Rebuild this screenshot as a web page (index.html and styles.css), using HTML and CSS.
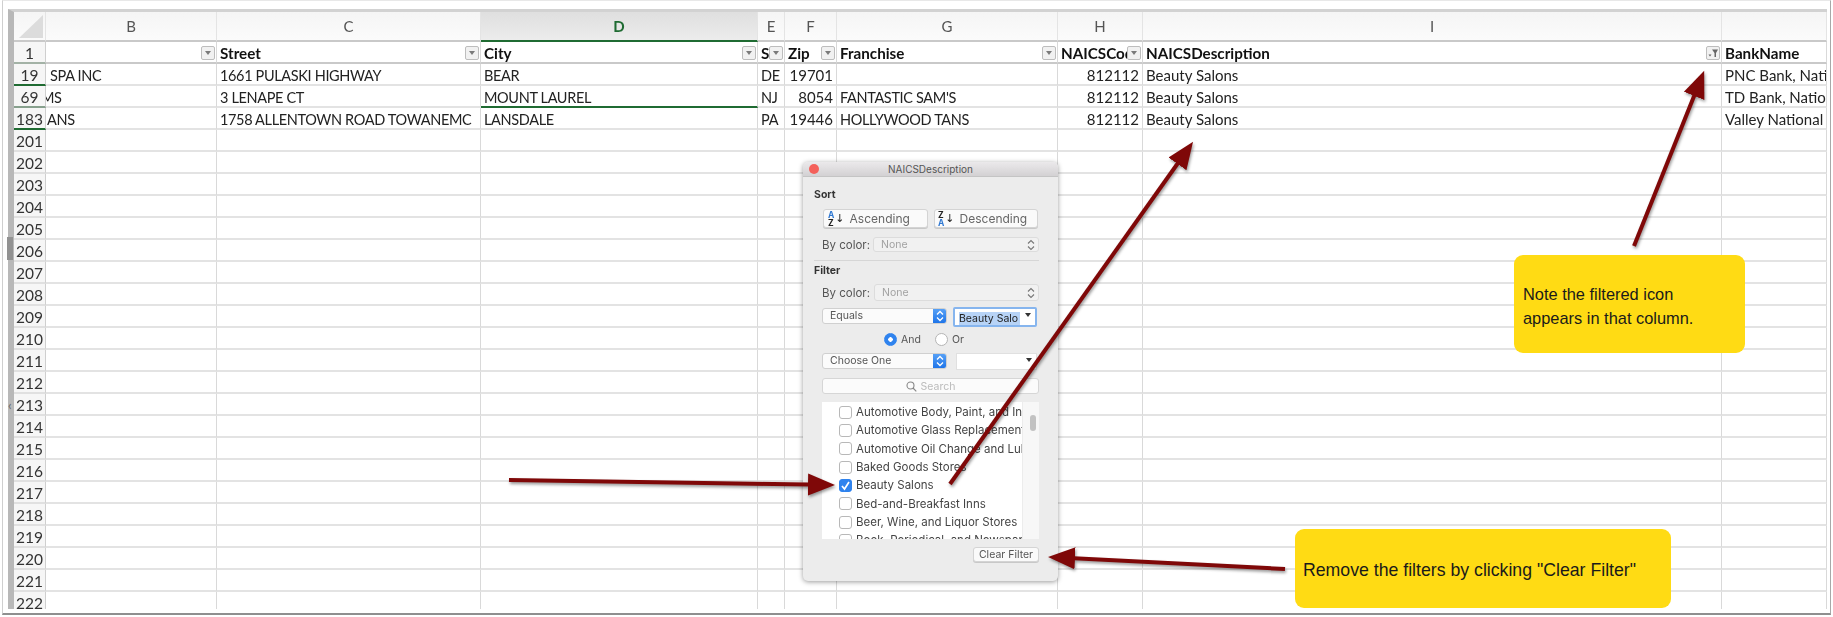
FILE: index.html
```html
<!DOCTYPE html>
<html lang="en">
<head>
  <meta charset="UTF-8">
  <title>NAICSDescription filter</title>
  <link rel="stylesheet" href="styles.css">
</head>
<body>

  <div class="frame">
    <div class="sheet">
      <table class="grid">
        <colgroup>
          <col class="c-num"><col class="c-b"><col class="c-c"><col class="c-d"><col class="c-e">
          <col class="c-f"><col class="c-g"><col class="c-h"><col class="c-i"><col class="c-j">
        </colgroup>
        <tr class="letters">
          <th class="corner"><span class="corner-mark"></span></th>
          <th>B</th><th>C</th><th class="active">D</th><th>E</th><th>F</th><th>G</th><th>H</th><th>I</th><th></th>
        </tr>
        <tr class="titles">
          <th class="num">1</th>
          <td><div class="title"><span></span><i class="drop"></i></div></td>
          <td><div class="title"><span>Street</span><i class="drop"></i></div></td>
          <td><div class="title"><span>City</span><i class="drop"></i></div></td>
          <td><div class="title"><span>S</span><i class="drop"></i></div></td>
          <td><div class="title"><span>Zip</span><i class="drop"></i></div></td>
          <td><div class="title"><span>Franchise</span><i class="drop"></i></div></td>
          <td><div class="title"><span>NAICSCode</span><i class="drop"></i></div></td>
          <td><div class="title"><span>NAICSDescription</span>
            <i class="drop filtered"><svg width="12" height="12" viewBox="0 0 12 12"><path d="M1.5 7.5h3l-1.5 2z" fill="#666"/><path d="M5 2.5h6L9 6v4H7.500V6z" fill="#666"/></svg></i>
          </div></td>
          <td><div class="title"><span>BankName</span></div></td>
        </tr>
        <tr>
          <th class="num mark">19</th><td class="caps cut-b">SPA INC</td><td class="caps">1661 PULASKI HIGHWAY</td><td class="caps">BEAR</td><td class="caps">DE</td>
          <td class="r">19701</td><td></td><td class="r">812112</td><td>Beauty Salons</td><td>PNC Bank, National Association</td>
        </tr>
        <tr>
          <th class="num soft">69</th><td class="caps cut-m">MS</td><td class="caps">3 LENAPE CT</td><td class="caps picked">MOUNT LAUREL</td><td class="caps">NJ</td>
          <td class="r">8054</td><td class="caps">FANTASTIC SAM'S</td><td class="r">812112</td><td>Beauty Salons</td><td>TD Bank, National Association</td>
        </tr>
        <tr>
          <th class="num mark">183</th><td class="caps cut-a">ANS</td><td class="caps">1758 ALLENTOWN ROAD TOWANEMC</td><td class="caps">LANSDALE</td><td class="caps">PA</td>
          <td class="r">19446</td><td class="caps">HOLLYWOOD TANS</td><td class="r">812112</td><td>Beauty Salons</td><td>Valley National Bank</td>
        </tr>
        <tr><th class="num">201</th><td></td><td></td><td></td><td></td><td></td><td></td><td></td><td></td><td></td></tr>
        <tr><th class="num">202</th><td></td><td></td><td></td><td></td><td></td><td></td><td></td><td></td><td></td></tr>
        <tr><th class="num">203</th><td></td><td></td><td></td><td></td><td></td><td></td><td></td><td></td><td></td></tr>
        <tr><th class="num">204</th><td></td><td></td><td></td><td></td><td></td><td></td><td></td><td></td><td></td></tr>
        <tr><th class="num">205</th><td></td><td></td><td></td><td></td><td></td><td></td><td></td><td></td><td></td></tr>
        <tr><th class="num">206</th><td></td><td></td><td></td><td></td><td></td><td></td><td></td><td></td><td></td></tr>
        <tr><th class="num">207</th><td></td><td></td><td></td><td></td><td></td><td></td><td></td><td></td><td></td></tr>
        <tr><th class="num">208</th><td></td><td></td><td></td><td></td><td></td><td></td><td></td><td></td><td></td></tr>
        <tr><th class="num">209</th><td></td><td></td><td></td><td></td><td></td><td></td><td></td><td></td><td></td></tr>
        <tr><th class="num">210</th><td></td><td></td><td></td><td></td><td></td><td></td><td></td><td></td><td></td></tr>
        <tr><th class="num">211</th><td></td><td></td><td></td><td></td><td></td><td></td><td></td><td></td><td></td></tr>
        <tr><th class="num">212</th><td></td><td></td><td></td><td></td><td></td><td></td><td></td><td></td><td></td></tr>
        <tr><th class="num">213</th><td></td><td></td><td></td><td></td><td></td><td></td><td></td><td></td><td></td></tr>
        <tr><th class="num">214</th><td></td><td></td><td></td><td></td><td></td><td></td><td></td><td></td><td></td></tr>
        <tr><th class="num">215</th><td></td><td></td><td></td><td></td><td></td><td></td><td></td><td></td><td></td></tr>
        <tr><th class="num">216</th><td></td><td></td><td></td><td></td><td></td><td></td><td></td><td></td><td></td></tr>
        <tr><th class="num">217</th><td></td><td></td><td></td><td></td><td></td><td></td><td></td><td></td><td></td></tr>
        <tr><th class="num">218</th><td></td><td></td><td></td><td></td><td></td><td></td><td></td><td></td><td></td></tr>
        <tr><th class="num">219</th><td></td><td></td><td></td><td></td><td></td><td></td><td></td><td></td><td></td></tr>
        <tr><th class="num">220</th><td></td><td></td><td></td><td></td><td></td><td></td><td></td><td></td><td></td></tr>
        <tr><th class="num">221</th><td></td><td></td><td></td><td></td><td></td><td></td><td></td><td></td><td></td></tr>
        <tr><th class="num">222</th><td></td><td></td><td></td><td></td><td></td><td></td><td></td><td></td><td></td></tr>
      </table>
    </div>
  </div>

  <div class="bar-thumb"></div>
  <div class="bar-arrow">‹</div>

  <div class="dialog">
    <div class="titlebar"><span class="close"></span>NAICSDescription</div>
    <div class="panel">
      <div class="heading">Sort</div>
      <div class="sort-row">
        <div class="btn sort-asc"><span class="az"><b class="blue">A</b><b>Z</b></span><span class="down">↓</span>Ascending</div>
        <div class="btn sort-desc"><span class="az"><b>Z</b><b class="blue">A</b></span><span class="down">↓</span>Descending</div>
      </div>
      <div class="color-row one">
        <span class="color-label">By color:</span>
        <div class="select-off">None
          <svg width="8" height="12" viewBox="0 0 8 12"><path d="M1 4.500l3-3 3 3M1 7.500l3 3 3-3" fill="none" stroke="#777" stroke-width="1.100"/></svg>
        </div>
      </div>
      <div class="divider"></div>
      <div class="heading second">Filter</div>
      <div class="color-row two">
        <span class="color-label">By color:</span>
        <div class="select-off">None
          <svg width="8" height="12" viewBox="0 0 8 12"><path d="M1 4.500l3-3 3 3M1 7.500l3 3 3-3" fill="none" stroke="#777" stroke-width="1.100"/></svg>
        </div>
      </div>
      <div class="rule-row">
        <div class="select">Equals
          <span class="stepper"><svg width="8" height="12" viewBox="0 0 8 12"><path d="M1 4.500l3-3 3 3M1 7.500l3 3 3-3" fill="none" stroke="#fff" stroke-width="1.300"/></svg></span>
        </div>
        <div class="combo focus"><span class="sel-text">Beauty Salo</span><i class="tri"></i></div>
      </div>
      <div class="radio-row">
        <span class="radio on"></span><span class="radio-label">And</span>
        <span class="radio"></span><span class="radio-label">Or</span>
      </div>
      <div class="rule-row choose">
        <div class="select">Choose One
          <span class="stepper"><svg width="8" height="12" viewBox="0 0 8 12"><path d="M1 4.500l3-3 3 3M1 7.500l3 3 3-3" fill="none" stroke="#fff" stroke-width="1.300"/></svg></span>
        </div>
        <div class="combo"><i class="tri"></i></div>
      </div>
      <div class="search">
        <svg width="11" height="11" viewBox="0 0 11 11"><circle cx="4.500" cy="4.500" r="3.500" fill="none" stroke="#888" stroke-width="1.100"/><path d="M7 7l3.300 3.300" stroke="#888" stroke-width="1.200"/></svg>
        Search
      </div>
      <div class="list">
        <div class="items">
          <div class="item"><span class="check"></span>Automotive Body, Paint, and Interior</div>
          <div class="item"><span class="check"></span>Automotive Glass Replacement</div>
          <div class="item"><span class="check"></span>Automotive Oil Change and Lube</div>
          <div class="item"><span class="check"></span>Baked Goods Stores</div>
          <div class="item"><span class="check on"><svg width="11" height="11" viewBox="0 0 11 11"><path d="M2 6l2.500 3L9 2" fill="none" stroke="#fff" stroke-width="1.700"/></svg></span>Beauty Salons</div>
          <div class="item"><span class="check"></span>Bed-and-Breakfast Inns</div>
          <div class="item"><span class="check"></span>Beer, Wine, and Liquor Stores</div>
          <div class="item"><span class="check"></span>Book, Periodical, and Newspaper</div>
        </div>
        <div class="track"><div class="thumb"></div></div>
      </div>
      <div class="clear-row"><div class="btn clear">Clear Filter</div></div>
    </div>
  </div>

  <svg class="arrows" width="1833" height="617" viewBox="0 0 1833 617">
    <defs>
      <marker id="head" markerUnits="userSpaceOnUse" markerWidth="28" markerHeight="24" refX="1" refY="11.500" orient="auto">
        <path d="M0 0.500L27 11.500L0 22.500z" fill="#7f0808"/>
      </marker>
    </defs>
    <line x1="1634" y1="246" x2="1694.500" y2="95" marker-end="url(#head)"/>
    <line x1="950" y1="484" x2="1178" y2="163" marker-end="url(#head)"/>
    <line x1="509" y1="480" x2="809" y2="484.600" marker-end="url(#head)"/>
    <line x1="1285" y1="569" x2="1074" y2="558.300" marker-end="url(#head)"/>
  </svg>

  <div class="note note-icon">Note the filtered icon appears in that column.</div>
  <div class="note note-clear">Remove the filters by clicking "Clear Filter"</div>

</body>
</html>
```

FILE: styles.css
```css
* {
  box-sizing: border-box;
}

html, body {
  margin: 0;
  padding: 0;
  width: 1833px;
  height: 617px;
  overflow: hidden;
  background-color: #ffffff;
}

body {
  position: relative;
  font-family: "Lato", "Liberation Sans", sans-serif;
}

/* spreadsheet */
.frame {
  width: 1829px;
  height: 615px;
  margin-left: 2px;
  padding: 9px 3px 5px 5px;
  border-top: 1px solid #e8e8e8;
  border-left: 1px solid #cfcfcf;
  border-right: 1px solid #a8a8a8;
  border-bottom: 2px solid #8f8f8f;
}

.sheet {
  width: 1819px;
  height: 600px;
  margin-top: -1px;
  overflow: hidden;
  border-top: 3px solid #d2d2d2;
  border-left: 6px solid #b8b8b8;
  filter: blur(0.35px);
}

.bar-thumb {
  position: absolute;
  left: 7px;
  top: 237px;
  width: 6px;
  height: 23px;
  background-color: #929292;
}

.bar-arrow {
  position: absolute;
  left: 8px;
  top: 398px;
  font-size: 13px;
  line-height: 14px;
  color: #666;
}

.grid {
  table-layout: fixed;
  width: 1813px;
  border-collapse: separate;
  border-spacing: 0;
  font-size: 15px;
  color: #222;
}

.c-num { width: 32px; }
.c-b { width: 171px; }
.c-c { width: 264px; }
.c-d { width: 277px; }
.c-e { width: 27px; }
.c-f { width: 52px; }
.c-g { width: 221px; }
.c-h { width: 85px; }
.c-i { width: 579px; }
.c-j { width: 105px; }

.grid tr {
  height: 22px;
}

.grid td {
  height: 22px;
  padding: 2px 0 0 3px;
  overflow: hidden;
  white-space: nowrap;
  border-right: 1px solid #d9d9d9;
  border-bottom: 2px solid #e3e3e3;
}

.grid .r {
  text-align: right;
  padding-right: 3px;
}

.grid .caps {
  font-size: 14.500px;
  letter-spacing: -0.350px;
}

.letters {
  height: 30px !important;
}

.letters th {
  height: 30px;
  padding: 0;
  font-weight: 400;
  font-size: 15px;
  color: #555;
  background: linear-gradient(#f5f5f5, #fbfbfb);
  border-right: 1px solid #e4e4e4;
  border-bottom: 2px solid #c9c9c9;
}

.letters .active {
  font-weight: 700;
  color: #1f6b32;
  background: linear-gradient(#dfdfdf, #ececec);
  border-bottom: 2px solid #1f6b32;
}

.corner-mark {
  display: block;
  width: 0;
  height: 0;
  margin: 0 0 0 5px;
  border-left: 24px solid transparent;
  border-bottom: 23px solid #dcdcdc;
}

.num {
  padding: 2px 0 0 0;
  font-weight: 400;
  font-size: 15.500px;
  color: #333;
  text-align: center;
  background-color: #f6f6f6;
  border-right: 1px solid #cfcfcf;
  border-bottom: 2px solid #e0e0e0;
}

.num.mark {
  border-bottom-color: #1f6b32;
}

.num.soft {
  border-bottom-color: #87a08d;
}

.grid .titles td {
  padding: 1px 1px 0 3px;
  border-bottom: 2px solid #c9c9c9;
}

.titles .num {
  border-bottom: 2px solid #a3b2a6;
}

.title {
  display: flex;
  align-items: center;
  justify-content: space-between;
  font-weight: 700;
  font-size: 15.200px;
  color: #111;
}

.title span {
  min-width: 0;
  overflow: hidden;
}

.drop {
  flex: none;
  position: relative;
  width: 14px;
  height: 14px;
  background-color: #f1f1f1;
  border: 1px solid #bdbdbd;
  border-radius: 2px;
}

.drop::after {
  content: "";
  position: absolute;
  left: 3px;
  top: 4px;
  border-left: 3.500px solid transparent;
  border-right: 3.500px solid transparent;
  border-top: 4px solid #7a7a7a;
}

.drop.filtered::after {
  display: none;
}

.drop svg {
  display: block;
}

.picked {
  border-bottom-color: #1f6b32 !important;
}

.grid .cut-b {
  padding-left: 4px;
}

.grid .cut-m {
  text-indent: -9px;
  padding-left: 4px;
}

.grid .cut-a {
  padding-left: 1px;
}

/* filter dialog */
.dialog {
  position: absolute;
  left: 803px;
  top: 162px;
  width: 255px;
  height: 419px;
  border-radius: 5px;
  background-color: #ececec;
  box-shadow: 0 1px 5px rgba(0, 0, 0, 0.4);
  font-family: "Inter", "Liberation Sans", sans-serif;
  font-size: 10.500px;
  color: #444;
  filter: blur(0.3px);
  overflow: hidden;
}

.titlebar {
  position: relative;
  height: 15px;
  line-height: 15px;
  font-size: 10px;
  text-align: center;
  color: #555;
  background: linear-gradient(#ebe9eb, #d3d1d3);
  border-bottom: 1px solid #c4c4c4;
}

.close {
  position: absolute;
  left: 6px;
  top: 2px;
  width: 10px;
  height: 10px;
  border-radius: 50%;
  background-color: #f4605a;
}

.panel {
  display: flex;
  flex-direction: column;
  padding: 10px 19px 0 11px;
}

.heading {
  height: 16px;
  line-height: 16px;
  font-weight: 700;
  color: #333;
}

.heading.second {
  margin-top: 2px;
}

.btn {
  display: flex;
  align-items: center;
  justify-content: center;
  background-color: #fafafa;
  border: 1px solid #d4d4d4;
  border-radius: 3px;
  box-shadow: 0 1px 0 #c8c8c8;
}

.sort-row {
  display: flex;
  gap: 6px;
  height: 19px;
  margin: 6px 0 0 9px;
  font-size: 12px;
  color: #666;
}

.sort-asc {
  width: 105px;
  justify-content: flex-start;
  padding-left: 4px;
}

.sort-desc {
  width: 104px;
  justify-content: flex-start;
  padding-left: 3px;
}

.az {
  display: flex;
  flex-direction: column;
  font-size: 8.500px;
  line-height: 8px;
  color: #222;
}

.az .blue {
  color: #2f78d2;
}

.down {
  margin: 0 5px 0 1px;
  font-size: 11px;
  color: #222;
  font-family: "DejaVu Sans", sans-serif;
}

.color-row {
  display: flex;
  align-items: center;
  margin-left: 8px;
}

.color-row.one {
  height: 15px;
  margin-top: 9px;
}

.color-row.two {
  height: 17px;
  margin-top: 5px;
}

.color-label {
  width: 51px;
  font-size: 11.500px;
  color: #555;
}

.two .color-label {
  width: 52px;
}

.select-off {
  flex: 1;
  align-self: stretch;
  display: flex;
  align-items: center;
  justify-content: space-between;
  padding: 0 3px 0 7px;
  color: #a2a2a2;
  background-color: #f1f1f1;
  border: 1px solid #dcdcdc;
  border-radius: 3px;
}

.divider {
  height: 1px;
  margin-top: 8px;
  background-color: #d6d6d6;
}

.rule-row {
  display: flex;
  height: 20px;
  margin: 6px 0 0 8px;
}

.rule-row.choose {
  height: 17px;
  margin-top: 7px;
}

.select {
  position: relative;
  width: 125px;
  height: 16px;
  margin-top: 1px;
  padding-left: 7px;
  line-height: 14px;
  color: #555;
  background-color: #fbfbfb;
  border: 1px solid #d0d0d0;
  border-radius: 3px;
  overflow: hidden;
}

.choose .select {
  margin-top: 0;
}

.stepper {
  position: absolute;
  right: -1px;
  top: -1px;
  width: 14px;
  height: 16px;
  display: flex;
  align-items: center;
  justify-content: center;
  background: linear-gradient(#5aa3f7, #1b72e8);
}

.combo {
  position: relative;
  width: 81px;
  height: 17px;
  margin-left: 9px;
  background-color: #fff;
  border: 1px solid #e0e0e0;
}

.combo.focus {
  width: 84px;
  height: 20px;
  margin-left: 6px;
  padding: 3px 0 0 4px;
  border: 2px solid #86b5ee;
  border-radius: 2px;
  color: #222;
  overflow: hidden;
}

.sel-text {
  display: block;
  width: 61px;
  overflow: hidden;
  white-space: nowrap;
  line-height: 14px;
  background-color: #b7d3f6;
}

.tri {
  position: absolute;
  right: 4px;
  top: 4px;
  border-left: 3px solid transparent;
  border-right: 3px solid transparent;
  border-top: 4px solid #333;
}

.radio-row {
  display: flex;
  align-items: center;
  height: 14px;
  margin: 5px 0 0 70px;
}

.radio {
  width: 13px;
  height: 13px;
  border-radius: 50%;
  background-color: #fff;
  border: 1px solid #b5b5b5;
}

.radio.on {
  background: radial-gradient(circle, #fff 0, #fff 2px, #2f83ee 2.500px);
  border-color: #2f83ee;
}

.radio-label {
  margin: 0 14px 0 4px;
  color: #555;
}

.search {
  display: flex;
  align-items: center;
  justify-content: center;
  gap: 4px;
  height: 16px;
  margin: 8px 0 0 8px;
  color: #bbb;
  background-color: #fbfbfb;
  border: 1px solid #d6d6d6;
  border-radius: 3px;
}

.list {
  display: flex;
  height: 137px;
  margin: 8px 0 0 8px;
  background-color: #fff;
  overflow: hidden;
}

.items {
  width: 200px;
  padding: 1px 0 0 17px;
  overflow: hidden;
}

.item {
  display: flex;
  align-items: center;
  height: 18.330px;
  font-size: 11.500px;
  white-space: nowrap;
  overflow: hidden;
  color: #444;
}

.check {
  flex: none;
  display: flex;
  align-items: center;
  justify-content: center;
  width: 13px;
  height: 13px;
  margin-right: 4px;
  background-color: #fff;
  border: 1px solid #b8b8b8;
  border-radius: 3px;
}

.check.on {
  background-color: #2f83ee;
  border-color: #2f83ee;
}

.track {
  flex: 1;
  padding: 13px 3px 0 7px;
  background-color: #f7f7f7;
  border-left: 1px solid #ececec;
}

.thumb {
  height: 16px;
  border-radius: 4px;
  background-color: #c2c2c2;
}

.clear-row {
  display: flex;
  justify-content: flex-end;
  margin-top: 8px;
}

.clear {
  width: 66px;
  height: 15px;
  color: #555;
}

/* annotations */
.arrows {
  position: absolute;
  left: 0;
  top: 0;
  filter: drop-shadow(1px 2px 1.500px rgba(0, 0, 0, 0.4));
}

.arrows line {
  stroke: #7f0808;
  stroke-width: 4;
}

.note {
  position: absolute;
  display: flex;
  align-items: center;
  padding-left: 9px;
  font-family: "Liberation Sans", Arial, sans-serif;
  line-height: 24px;
  color: #1a1a1a;
  background-color: #ffdb14;
  border-radius: 9px;
}

.note-icon {
  left: 1514px;
  top: 255px;
  width: 231px;
  height: 98px;
  padding-top: 4px;
  padding-right: 30px;
  font-size: 16.400px;
}

.note-clear {
  left: 1295px;
  top: 529px;
  width: 376px;
  height: 79px;
  padding-left: 8px;
  padding-top: 3px;
  font-size: 17.700px;
}
```
